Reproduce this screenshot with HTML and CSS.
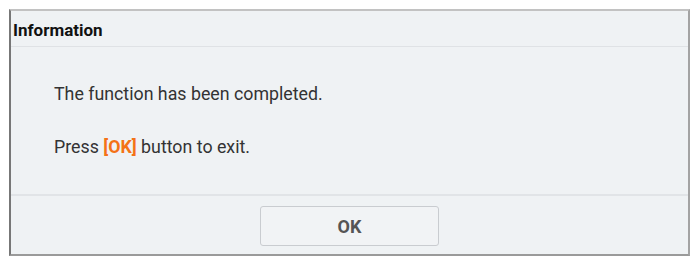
FILE: index.html
```html
<!DOCTYPE html>
<html>
	<head>
		<meta charset="UTF-8">
		<title>Information</title>
		<link rel="stylesheet" href="styles.css">
	</head>
	<body>
		<div class="dialog">
			<div class="dialog-title">Information</div>
			<div class="dialog-body">
				<p>The function has been completed.</p>
				<p>Press <span class="key">[OK]</span> button to exit.</p>
			</div>
			<div class="dialog-footer">
				<a href="javascript:void(0);" class="dialog-button">OK</a>
			</div>
		</div>
	</body>
</html>
```

FILE: styles.css
```css
body {
	margin: 0;
	background: #fff;
	font-family: Roboto, "Liberation Sans", sans-serif;
}
p, div, a {
	margin: 0;
	padding: 0;
}
.dialog {
	margin: 9px 0 0 9px;
	width: 677px;
	height: 243px;
	background: #eff2f4;
	border-top: 2px solid #c2c2c2;
	border-left: 2px solid #777;
	border-right: 2px solid #a3a3a3;
	border-bottom: 2px solid #9a9a9a;
	display: flex;
	flex-direction: column;
}
.dialog-title {
	height: 35px;
	line-height: 39px;
	padding-left: 2px;
	font-size: 17px;
	font-weight: bold;
	color: #111;
	border-bottom: 1px solid #dfe2e5;
}
.dialog-body {
	flex: 1;
	padding: 36px 0 0 43px;
	font-size: 17.8px;
	color: #333;
	border-bottom: 2px solid #e1e4e7;
}
.dialog-body p {
	line-height: 22px;
	margin-bottom: 31px;
}
.key {
	color: #f47216;
	font-weight: bold;
}
.dialog-footer {
	height: 58px;
	display: flex;
	justify-content: center;
	padding-top: 10px;
	box-sizing: border-box;
}
.dialog-button {
	display: block;
	width: 177px;
	height: 38px;
	line-height: 40px;
	text-align: center;
	border: 1px solid #c9ccd0;
	border-radius: 3px;
	background: #f1f3f5;
	color: #555;
	font-size: 18px;
	font-weight: bold;
	text-decoration: none;
}
```
